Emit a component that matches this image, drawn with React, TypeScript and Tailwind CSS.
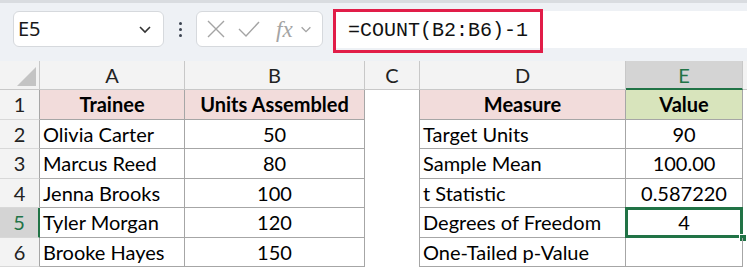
import React from 'react';

const cellFont = { fontFamily: 'Lato, "Noto Sans", sans-serif' };

const trainees = [
    ['Olivia Carter', '50'],
    ['Marcus Reed', '80'],
    ['Jenna Brooks', '100'],
    ['Tyler Morgan', '120'],
    ['Brooke Hayes', '150'],
];

const measures = [
    ['Target Units', '90'],
    ['Sample Mean', '100.00'],
    ['t Statistic', '0.587220'],
    ['Degrees of Freedom', '4'],
    ['One-Tailed p-Value', ''],
];

const Chevron: React.FC<{ className?: string }> = ({ className }) => (
    <svg viewBox="0 0 16 16" className={className} fill="none" stroke="currentColor" strokeWidth="1.6">
        <path d="M3 6l5 5 5-5" />
    </svg>
);

const FormulaBar: React.FC = () => {
    return (
        <div className="relative h-[61px] bg-[#eef1f5] border-t-[3px] border-[#d9dce0]">
            <div className="flex items-center h-full pl-[13px] pb-[6px]">
                <div className="w-[151px] h-[36px] bg-white border border-[#d6d9dd] rounded-[6px] flex items-center justify-between pl-[4px] pr-[10px]">
                    <span className="text-[20px] text-[#1a1a1a]" style={{ fontFamily: '"Noto Sans", sans-serif' }}>E5</span>
                    <Chevron className="w-[16px] h-[16px] text-[#333]" />
                </div>
                <div className="w-[32px] flex flex-col items-center gap-[3px]">
                    <span className="w-[3px] h-[3px] bg-[#3b4350] rounded-full" />
                    <span className="w-[3px] h-[3px] bg-[#3b4350] rounded-full" />
                    <span className="w-[3px] h-[3px] bg-[#3b4350] rounded-full" />
                </div>
                <div className="w-[127px] h-[36px] bg-white border border-[#d6d9dd] rounded-[6px] flex items-center pl-[9px] text-[#a4a4a4]">
                    <svg viewBox="0 0 20 20" className="w-[20px] h-[20px]" fill="none" stroke="currentColor" strokeWidth="1.4">
                        <path d="M2 2l16 16M18 2L2 18" />
                    </svg>
                    <svg viewBox="0 0 22 20" className="w-[22px] h-[20px] ml-[12px]" fill="none" stroke="currentColor" strokeWidth="1.4">
                        <path d="M1 10l7 7L21 3" />
                    </svg>
                    <span className="ml-[16px] text-[23px] italic leading-none" style={{ fontFamily: '"Liberation Serif", serif' }}>fx</span>
                    <Chevron className="w-[14px] h-[14px] ml-[6px]" />
                </div>
                <div className="ml-[10px] flex-1 h-[37px] bg-white" />
            </div>
            <div className="absolute left-[333px] top-[6px] w-[210px] h-[44px] border-[3px] border-[#e11d48] flex items-center pl-[12px]">
                <span className="text-[20px] text-[#111]" style={{ fontFamily: '"Liberation Mono", monospace' }}>=COUNT(B2:B6)-1</span>
            </div>
        </div>
    );
};

const cols = ['A', 'B', 'C', 'D', 'E'];

const App: React.FC = () => {
    return (
        <div className="w-[747px] h-[269px] overflow-hidden bg-white">
            <FormulaBar />
            <div className="grid grid-cols-[40px_145px_180px_55px_206px_117px_1fr] grid-rows-[29px_repeat(6,29.5px)] text-[20px] text-black" style={cellFont}>
                <div className="relative bg-[#f3f3f3] border-r border-b border-[#c8c8c8]">
                    <div className="absolute right-[3px] bottom-[3px] w-0 h-0 border-l-[19px] border-l-transparent border-b-[19px] border-b-[#c4c4c4]" />
                </div>
                {cols.map((c) =>
                    c === 'E' ? (
                        <div key={c} className="bg-[#d4d4d4] border-r border-[#c8c8c8] border-b-2 border-b-[#217346] flex items-center justify-center text-[#217346]">
                            {c}
                        </div>
                    ) : (
                        <div key={c} className="bg-[#f3f3f3] border-r border-b border-[#c8c8c8] border-b-[#c8c8c8] flex items-center justify-center text-[#222]">
                            {c}
                        </div>
                    )
                )}
                <div className="bg-[#f3f3f3] border-b border-[#c8c8c8]" />

                {[0, 1, 2, 3, 4, 5].map((r) => {
                    const selected = r === 4;
                    const isHead = r === 0;
                    const left = isHead ? ['Trainee', 'Units Assembled'] : trainees[r - 1];
                    const right = isHead ? ['Measure', 'Value'] : measures[r - 1];
                    const headCls = 'font-bold justify-center';
                    return (
                        <React.Fragment key={r}>
                            <div
                                className={
                                    selected
                                        ? 'bg-[#d4d4d4] text-[#217346] border-b border-[#d8d8d8] border-r-2 border-r-[#217346] flex items-center justify-center'
                                        : 'bg-[#f3f3f3] text-[#222] border-b border-[#d8d8d8] border-r border-r-[#a6a6a6] flex items-center justify-center'
                                }
                            >
                                {r + 1}
                            </div>
                            <div className={`flex items-center px-[3px] border-r border-b border-[#a6a6a6] ${isHead ? 'bg-[#f2dcdb] ' + headCls : ''}`}>
                                {left[0]}
                            </div>
                            <div className={`flex items-center justify-center border-r border-b border-[#a6a6a6] ${isHead ? 'bg-[#f2dcdb] ' + headCls : ''}`}>
                                {left[1]}
                            </div>
                            <div className="border-r border-[#a6a6a6]" />
                            <div className={`flex items-center px-[3px] border-r border-b border-[#a6a6a6] ${isHead ? 'bg-[#f2dcdb] ' + headCls : ''}`}>
                                {right[0]}
                            </div>
                            <div className={`relative flex items-center justify-center border-r border-b border-[#a6a6a6] ${isHead ? 'bg-[#d8e4bc] ' + headCls : ''}`}>
                                {right[1]}
                                {selected && (
                                    <>
                                        <div className="absolute -left-[1px] -top-[1px] -right-[1px] -bottom-[1px] border-[3px] border-[#217346]" />
                                        <div className="absolute -right-[5px] -bottom-[5px] w-[8px] h-[8px] bg-[#217346] border border-white" />
                                    </>
                                )}
                            </div>
                            <div />
                        </React.Fragment>
                    );
                })}
            </div>
        </div>
    );
};

export default App;
